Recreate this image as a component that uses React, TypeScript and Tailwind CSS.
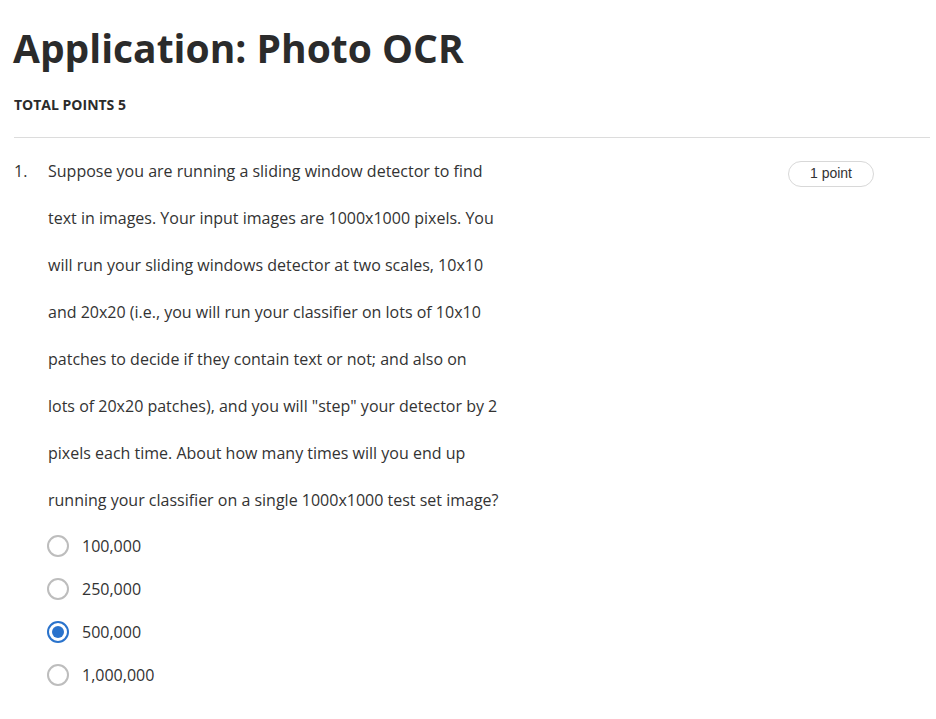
const options = ['100,000', '250,000', '500,000', '1,000,000']

const lines = [
    'Suppose you are running a sliding window detector to find',
    'text in images. Your input images are 1000x1000 pixels. You',
    'will run your sliding windows detector at two scales, 10x10',
    'and 20x20 (i.e., you will run your classifier on lots of 10x10',
    'patches to decide if they contain text or not; and also on',
    'lots of 20x20 patches), and you will "step" your detector by 2',
    'pixels each time. About how many times will you end up',
    'running your classifier on a single 1000x1000 test set image?',
]

function Radio({ checked }: { checked: boolean }) {
    return checked ? (
        <span className="w-[22px] h-[22px] rounded-full border-2 border-[#2a73cc] flex items-center justify-center shrink-0">
            <span className="w-[12px] h-[12px] rounded-full bg-[#2a73cc]" />
        </span>
    ) : (
        <span className="w-[22px] h-[22px] rounded-full border-2 border-[#bdbdbd] shrink-0" />
    )
}

export default function App() {
    return (
        <div className="min-h-screen bg-white text-[#333] pl-[14px] pr-[6px] pt-[20px]" style={{ fontFamily: '"Open Sans", sans-serif' }}>
            {/* Header */}
            <h1 className="font-bold text-[39px] leading-[56px] text-[#2b2b2b] -ml-[1px]">Application: Photo OCR</h1>
            <div className="mt-[19px] text-[14px] font-bold text-[#2b2b2b] leading-[19px]">TOTAL POINTS 5</div>
            <div className="mt-[23px] border-t border-[#dcdcdc]" />

            {/* Question */}
            <div className="flex pt-[10px]">
                <div className="w-[34px] text-[16px] leading-[47px] text-[#333]">1.</div>
                <div className="w-[740px]">
                    <p className="text-[16px] leading-[47px] text-[#333] whitespace-nowrap">
                        {lines.map((l, i) => (
                            <span key={i} className="block">{l}</span>
                        ))}
                    </p>
                    <div className="flex flex-col gap-[21px] mt-[11px]">
                        {options.map((o, i) => (
                            <label key={o} className="flex items-center gap-[13px] h-[22px] -ml-[1px]">
                                <Radio checked={i === 2} />
                                <span className="text-[16px] text-[#333]">{o}</span>
                            </label>
                        ))}
                    </div>
                </div>
                <div className="pt-[12px]">
                    <span
                        className="inline-flex items-center justify-center w-[86px] h-[26px] rounded-full border border-[#d8d8d8] text-[14px] text-[#333]"
                        style={{ fontFamily: '"Liberation Sans", Arial, sans-serif' }}
                    >
                        1 point
                    </span>
                </div>
            </div>
        </div>
    )
}
